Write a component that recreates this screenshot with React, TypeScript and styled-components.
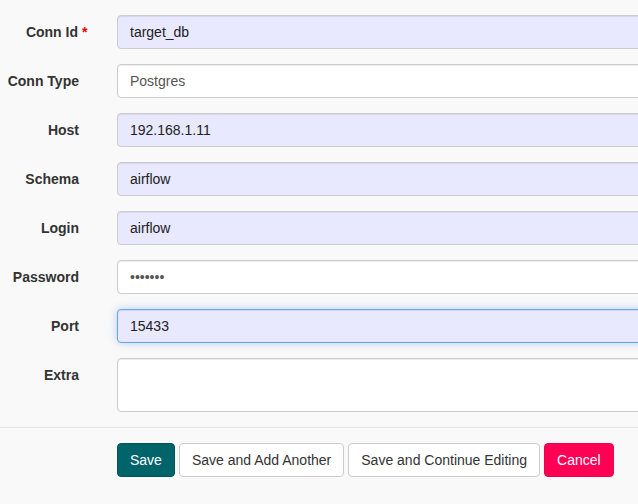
import React from "react";
import styled, { createGlobalStyle } from "styled-components";

const Global = createGlobalStyle`
  html, body { margin: 0; padding: 0; background: #f9f9f9; overflow: hidden; }
  body { font-family: "Liberation Sans", Arial, sans-serif; font-size: 14px; color: #333; }
  * { box-sizing: border-box; }
`;

const Page = styled.div`
  width: 638px;
  overflow: hidden;
  padding-top: 15px;
`;

const Row = styled.div`
  display: grid;
  grid-template-columns: 79px 560px;
  column-gap: 38px;
  align-items: start;
  margin-bottom: 15px;
`;

const Label = styled.label<{ $required?: boolean }>`
  position: relative;
  text-align: right;
  font-weight: bold;
  color: #333;
  line-height: 20px;
  padding-top: 7px;
  padding-right: ${(p) => (p.$required ? "1px" : "0")};
  white-space: nowrap;
`;

const Star = styled.span`
  position: absolute;
  left: 100%;
  margin-left: 3px;
  color: #e00;
`;

const Input = styled.input<{ $filled?: boolean; $focus?: boolean }>`
  display: block;
  width: 100%;
  height: 34px;
  padding: 6px 12px;
  font-family: inherit;
  font-size: 14px;
  line-height: 20px;
  color: ${(p) => (p.$filled ? "#222" : "#555")};
  background: ${(p) => (p.$filled ? "#e8e8fe" : "#fff")};
  border: 1px solid ${(p) => (p.$focus ? "#66a3e9" : "#ccc")};
  border-radius: 4px;
  box-shadow: ${(p) =>
    p.$focus
      ? "inset 0 1px 1px rgba(0,0,0,.075), 0 0 8px rgba(102,150,233,.45)"
      : "inset 0 1px 1px rgba(0,0,0,.075)"};
  outline: none;
`;

const TextArea = styled.textarea`
  display: block;
  width: 100%;
  height: 54px;
  padding: 6px 12px;
  font-family: inherit;
  font-size: 14px;
  background: #fff;
  border: 1px solid #ccc;
  border-radius: 4px;
  box-shadow: inset 0 1px 1px rgba(0,0,0,.075);
  resize: none;
  outline: none;
`;

const Divider = styled.hr`
  border: 0;
  border-top: 1px solid #e6e6e6;
  margin: 1px 0 15px;
`;

const Actions = styled.div`
  display: flex;
  gap: 4px;
  padding-left: 117px;
`;

const Button = styled.button<{ $variant?: "primary" | "danger" }>`
  height: 34px;
  padding: 6px 12px;
  font-family: inherit;
  font-size: 14px;
  line-height: 20px;
  border-radius: 4px;
  cursor: pointer;
  color: ${(p) => (p.$variant ? "#fff" : "#333")};
  background: ${(p) =>
    p.$variant === "primary" ? "#00646a" : p.$variant === "danger" ? "#ff0055" : "#fff"};
  border: 1px solid
    ${(p) =>
      p.$variant === "primary" ? "#005559" : p.$variant === "danger" ? "#f00050" : "#ccc"};
`;

const fields: { label: string; value: string; filled?: boolean; required?: boolean; type?: string; focus?: boolean }[] = [
  { label: "Conn Id", value: "target_db", filled: true, required: true },
  { label: "Conn Type", value: "Postgres" },
  { label: "Host", value: "192.168.1.11", filled: true },
  { label: "Schema", value: "airflow", filled: true },
  { label: "Login", value: "airflow", filled: true },
  { label: "Password", value: "airflow", type: "password" },
  { label: "Port", value: "15433", filled: true, focus: true },
];

export default function App() {
  return (
    <Page>
      <Global />
      {fields.map((f) => (
        <Row key={f.label}>
          <Label $required={f.required}>
            {f.label}
            {f.required && <Star>*</Star>}
          </Label>
          <Input
            type={f.type ?? "text"}
            defaultValue={f.value}
            $filled={f.filled}
            $focus={f.focus}
            readOnly
          />
        </Row>
      ))}
      <Row>
        <Label>Extra</Label>
        <TextArea readOnly />
      </Row>
      <Divider />
      <Actions>
        <Button $variant="primary">Save</Button>
        <Button>Save and Add Another</Button>
        <Button>Save and Continue Editing</Button>
        <Button $variant="danger">Cancel</Button>
      </Actions>
    </Page>
  );
}
